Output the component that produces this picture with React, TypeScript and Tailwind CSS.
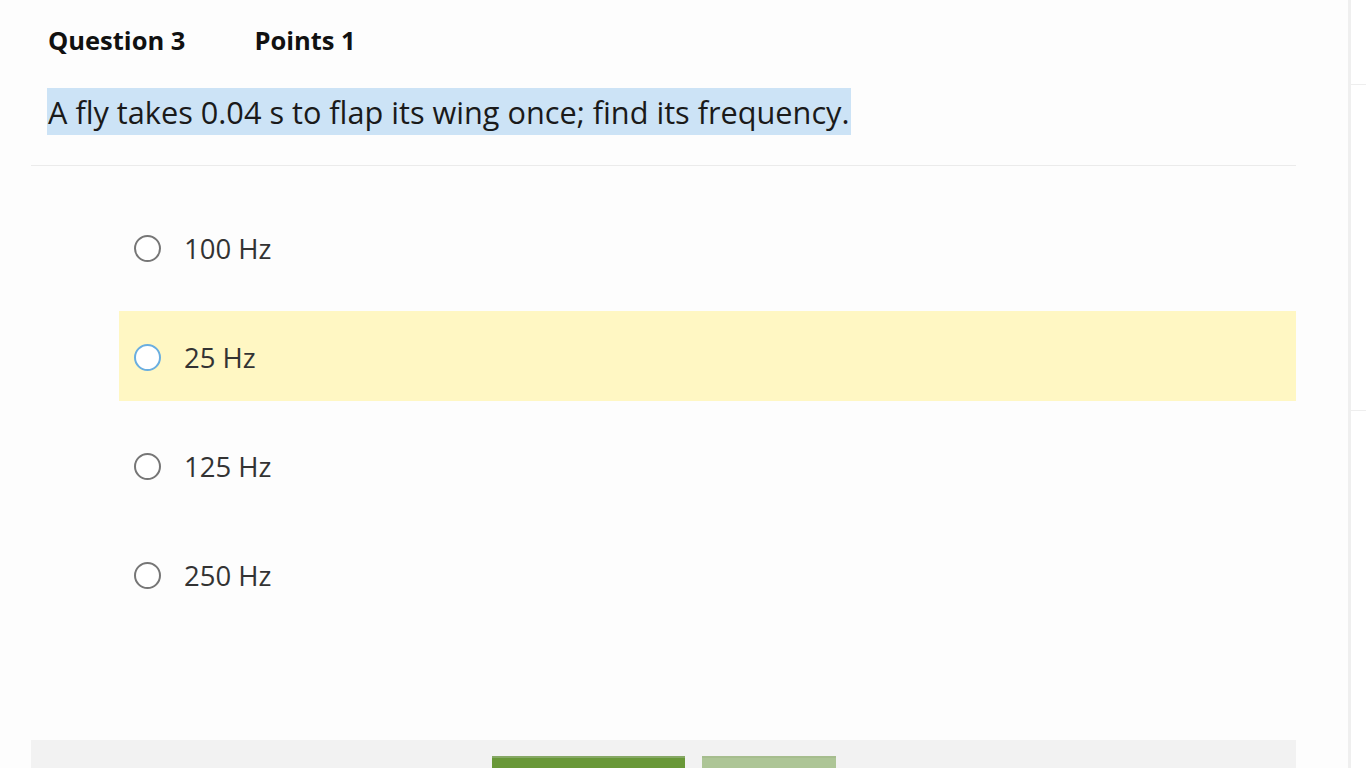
const options = ['100 Hz', '25 Hz', '125 Hz', '250 Hz'];

export default function App() {
  const hovered = 1;

  return (
    <div
      className="flex h-[768px] w-[1366px] overflow-hidden bg-[#fdfdfd] text-[#222]"
      style={{ fontFamily: '"Open Sans", "Noto Sans", sans-serif' }}
    >
      {/* main question column */}
      <div className="flex w-[1348px] shrink-0 flex-col pl-[31px] pr-[52px]">
        <div className="flex h-[80px] items-center gap-[69px] pl-[17px] text-[25.5px] font-bold text-[#111]">
          <span>Question 3</span>
          <span>Points 1</span>
        </div>

        <div className="border-b border-[#ebebeb] pb-[30px] pl-[16px] pt-[8px]">
          <span className="bg-[#cce3f6] py-[2.5px] pl-[1px] pr-[1px] text-[30.7px] leading-[47px] text-[#1a1a1a]">
            A fly takes 0.04 s to flap its wing once; find its frequency.
          </span>
        </div>

        <div className="flex flex-col pl-[88px] pt-[36px]">
          {options.map((opt, i) => (
            <div
              key={opt}
              className={`flex h-[90px] items-center gap-[23px] pl-[15px] pt-[3px] ${
                i === hovered ? 'bg-[#fff7c3]' : ''
              } ${i < options.length - 1 ? 'mb-[19px]' : ''}`}
            >
              <span
                className={`h-[27px] w-[27px] rounded-full border-2 ${
                  i === hovered ? 'border-[#6aaee0]' : 'border-[#767676]'
                } bg-white`}
              />
              <span className="text-[27.5px] text-[#333]">{opt}</span>
            </div>
          ))}
        </div>

        <div className="mt-auto flex h-[28px] justify-center gap-[17px] bg-[#f2f2f2] pt-[16px]">
          <div className="w-[193px] border-t-2 border-[#86a865] bg-[#699838]" />
          <div className="w-[134px] border-t-2 border-[#a6bd8e] bg-[#adc596]" />
        </div>
      </div>

      {/* right sidebar edge */}
      <div className="flex flex-1 flex-col border-l-[3px] border-[#efefef] bg-white pt-[84px]">
        <div className="h-[327px] border-t border-b border-[#eeeeee]" />
      </div>
    </div>
  );
}
